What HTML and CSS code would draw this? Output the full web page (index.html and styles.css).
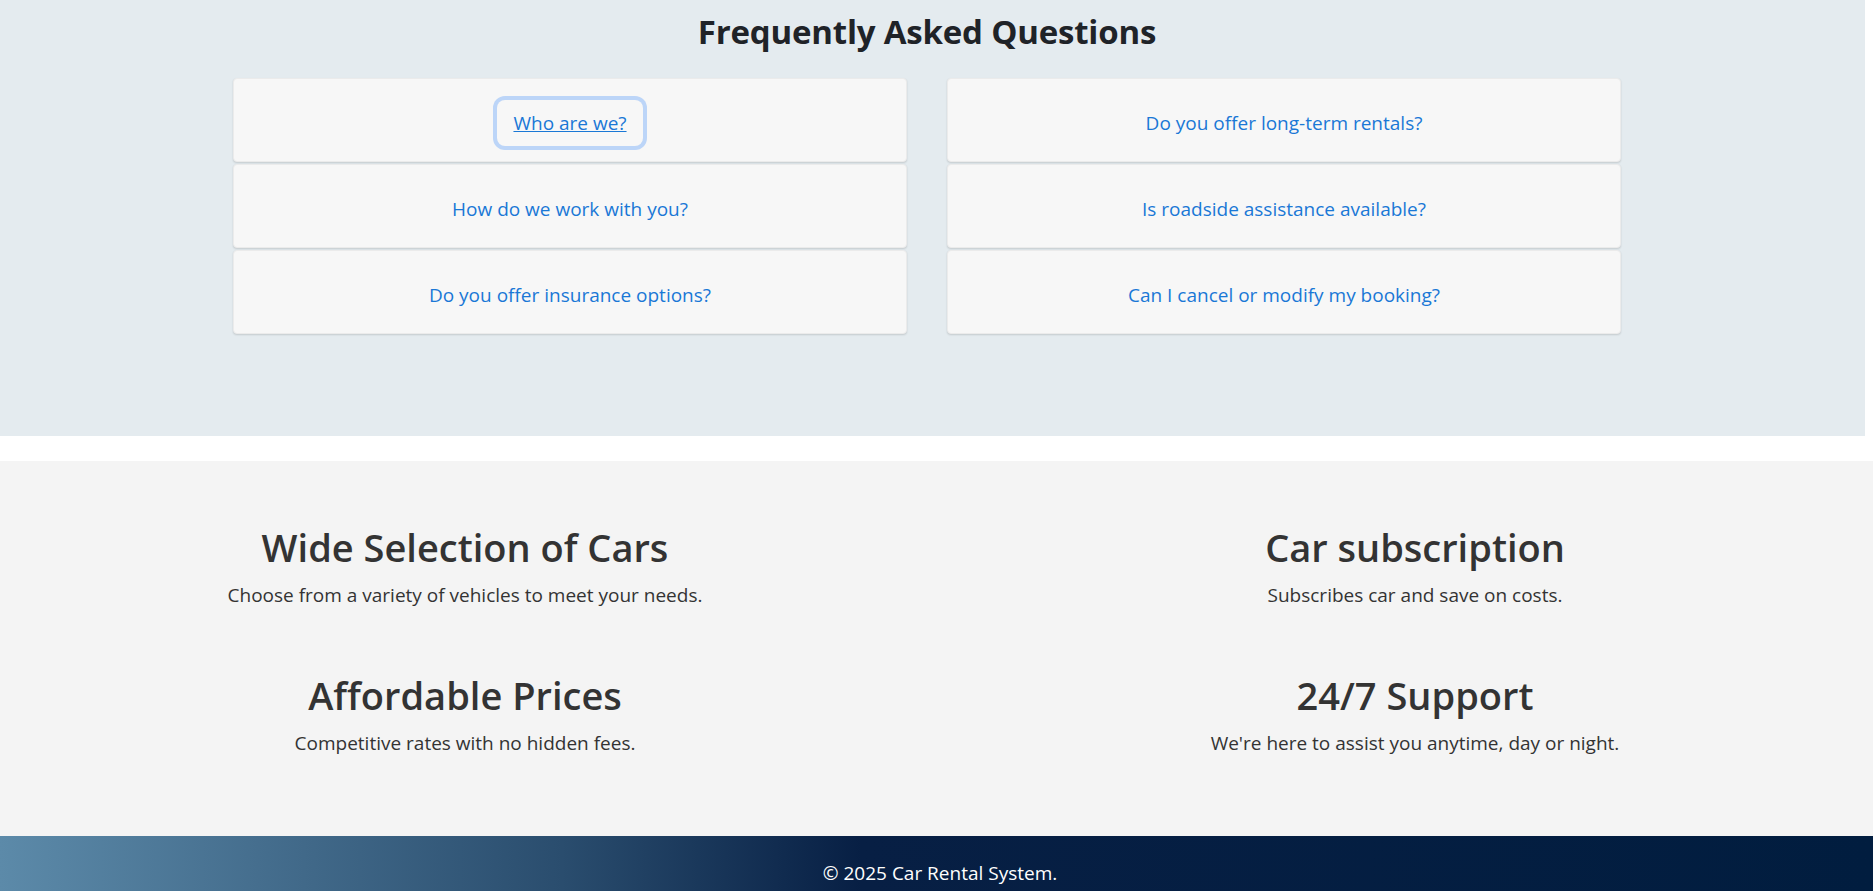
FILE: index.html
```html
<!DOCTYPE html>
<html lang="en">
<head>
<meta charset="utf-8">
<title>Car Rental System</title>
<link rel="stylesheet" href="styles.css">
</head>
<body>
<section class="faq">
  <h2 class="faq-title">Frequently Asked Questions</h2>
  <div class="faq-grid">
    <div class="faq-col">
      <div class="faq-card"><button class="faq-btn is-focused" type="button">Who are we?</button></div>
      <div class="faq-card"><button class="faq-btn" type="button">How do we work with you?</button></div>
      <div class="faq-card"><button class="faq-btn" type="button">Do you offer insurance options?</button></div>
    </div>
    <div class="faq-col">
      <div class="faq-card"><button class="faq-btn" type="button">Do you offer long-term rentals?</button></div>
      <div class="faq-card"><button class="faq-btn" type="button">Is roadside assistance available?</button></div>
      <div class="faq-card"><button class="faq-btn" type="button">Can I cancel or modify my booking?</button></div>
    </div>
  </div>
</section>

<section class="features">
  <div class="feature">
    <h2 class="feature-title">Wide Selection of Cars</h2>
    <p class="feature-text">Choose from a variety of vehicles to meet your needs.</p>
  </div>
  <div class="feature">
    <h2 class="feature-title">Car subscription</h2>
    <p class="feature-text">Subscribes car and save on costs.</p>
  </div>
  <div class="feature">
    <h2 class="feature-title">Affordable Prices</h2>
    <p class="feature-text">Competitive rates with no hidden fees.</p>
  </div>
  <div class="feature">
    <h2 class="feature-title">24/7 Support</h2>
    <p class="feature-text">We're here to assist you anytime, day or night.</p>
  </div>
</section>

<footer class="footer">
  <p class="footer-text">© 2025 Car Rental System.</p>
</footer>
</body>
</html>
```

FILE: styles.css
```css
* { box-sizing: border-box; }

html, body {
  margin: 0;
  padding: 0;
}

body {
  background: #ffffff;
  font-family: "Open Sans", "Noto Sans", sans-serif;
  color: #212529;
  overflow: hidden;
}

/* FAQ */
.faq {
  width: 1865px;
  height: 436px;
  background: #e4ebef;
  padding: 8px 244px 0 233px;
}

.faq-title {
  margin: 0;
  text-align: center;
  font-size: 33px;
  font-weight: 700;
  line-height: 48px;
  color: #1f2328;
  letter-spacing: -0.2px;
}

.faq-grid {
  display: grid;
  grid-template-columns: 1fr 1fr;
  column-gap: 40px;
  margin-top: 22px;
}

.faq-col {
  display: flex;
  flex-direction: column;
  gap: 2px;
}

.faq-card {
  height: 84px;
  background: #f7f7f7;
  border: 1px solid #ebebeb;
  border-radius: 4px;
  box-shadow: 0 1px 2px rgba(0, 0, 0, 0.14);
  display: flex;
  align-items: center;
  justify-content: center;
  padding-top: 5px;
}

.faq-btn {
  font-family: inherit;
  font-size: 19px;
  line-height: 28px;
  padding: 8px 15px;
  border: 1px solid transparent;
  border-radius: 8px;
  background: transparent;
  color: #1a78d6;
  cursor: pointer;
}

.faq-btn.is-focused {
  text-decoration: underline;
  box-shadow: 0 0 0 4px rgba(13, 110, 253, 0.25);
}

/* Features */
.features {
  margin-top: 25px;
  height: 375px;
  background: #f4f4f4;
  display: grid;
  grid-template-columns: 1fr 1fr;
  grid-auto-rows: 148px;
  column-gap: 250px;
  padding: 60px 108px 0 115px;
  color: #333333;
}

.feature {
  text-align: center;
}

.feature-title {
  margin: 0;
  font-size: 38px;
  font-weight: 600;
  line-height: 52px;
  color: #333333;
}

.feature-text {
  margin: 9px 0 0;
  font-size: 19px;
  line-height: 26px;
  color: #333333;
}

/* Footer */
.footer {
  height: 55px;
  background: linear-gradient(90deg, #5c8aa9 0%, #2a4d6e 30%, #071f44 46%, #011d3f 100%);
  display: flex;
  justify-content: center;
  padding: 24px 0 0 7px;
}

.footer-text {
  margin: 0;
  color: #ffffff;
  font-size: 19px;
  line-height: 26px;
}
```
